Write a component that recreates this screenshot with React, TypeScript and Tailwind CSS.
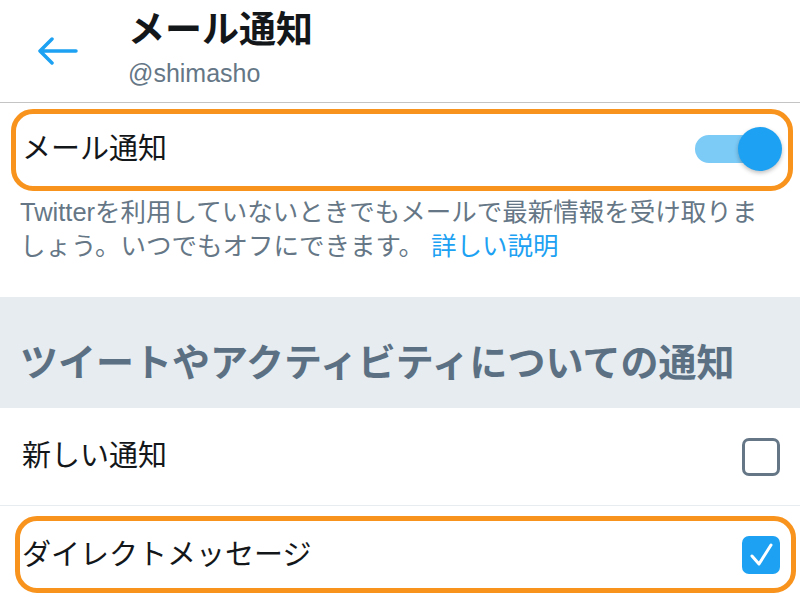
const font = "font-['Liberation_Sans','Noto_Sans_CJK_JP',sans-serif]";

function Highlight({ className }: { className: string }) {
  return <div className={`pointer-events-none absolute rounded-[22px] border-[5px] border-[#f8941d] ${className}`} />;
}

function Toggle() {
  return (
    <div className="relative h-[44px] w-[87px]">
      <div className="absolute left-0 top-[8px] h-[28px] w-[75px] rounded-full bg-[#7ccaf6]" />
      <div className="absolute right-0 top-0 h-[44px] w-[44px] rounded-full bg-[#1da1f2] shadow-[0_2px_4px_rgba(0,0,0,0.25)]" />
    </div>
  );
}

function Checkbox({ checked }: { checked: boolean }) {
  if (!checked) {
    return <div className="h-[38px] w-[38px] rounded-[7px] border-[3px] border-[#657786]" />;
  }
  return (
    <div className="flex h-[38px] w-[38px] items-center justify-center rounded-[7px] bg-[#1da1f2]">
      <svg width="38" height="38" viewBox="0 0 38 38" fill="none">
        <path d="M10 20 L17 28 L29 9" stroke="white" strokeWidth="3" strokeLinecap="round" strokeLinejoin="round" />
      </svg>
    </div>
  );
}

export default function App() {
  return (
    <main className={`h-[603px] w-[800px] overflow-hidden bg-white text-[#14171a] ${font}`}>
      <header className="flex h-[103px] border-b-[1.5px] border-[#c4c4c4]">
        <div className="flex w-[128px] items-center pl-[38px]">
          <svg width="40" height="28" viewBox="0 0 40 28" fill="none">
            <path d="M38 14 H3 M14 2 L2 14 L14 26" stroke="#1da1f2" strokeWidth="3.5" strokeLinecap="round" strokeLinejoin="round" />
          </svg>
        </div>
        <div className="flex flex-col pt-[9px]">
          <h1 className="text-[37px] font-bold leading-[44px]">メール通知</h1>
          <p className="mt-[5px] text-[25px] leading-[30px] text-[#657786]">@shimasho</p>
        </div>
      </header>

      <section className="relative flex h-[92px] items-center justify-between pl-[22px] pr-[18px]">
        <span className="text-[29px] leading-none">メール通知</span>
        <Toggle />
        <Highlight className="inset-x-[11px] bottom-[4px] top-[6px] left-[11px] right-[7px]" />
      </section>

      <p className="pb-[34px] pl-[20px] text-[25.5px] leading-[34px] text-[#657786]">
        Twitterを利用していないときでもメールで最新情報を受け取りま
        <br />
        しょう。いつでもオフにできます。 <span className="text-[#1da1f2]">詳しい説明</span>
      </p>

      <section className="h-[111px] bg-[#e6ecf0] pl-[20px] pt-[44px]">
        <h2 className="text-[38px] font-bold leading-[44px] text-[#5b7083]">ツイートやアクティビティについての通知</h2>
      </section>

      <section className="flex h-[98px] items-center justify-between border-b-[1.5px] border-[#e6ecf0] pl-[22px] pr-[20px]">
        <span className="text-[29px] leading-none">新しい通知</span>
        <Checkbox checked={false} />
      </section>

      <section className="relative flex h-[98px] items-center justify-between pl-[22px] pr-[20px]">
        <span className="text-[29px] leading-none">ダイレクトメッセージ</span>
        <Checkbox checked />
        <Highlight className="bottom-[11px] left-[15px] right-[4px] top-[10px]" />
      </section>
    </main>
  );
}
